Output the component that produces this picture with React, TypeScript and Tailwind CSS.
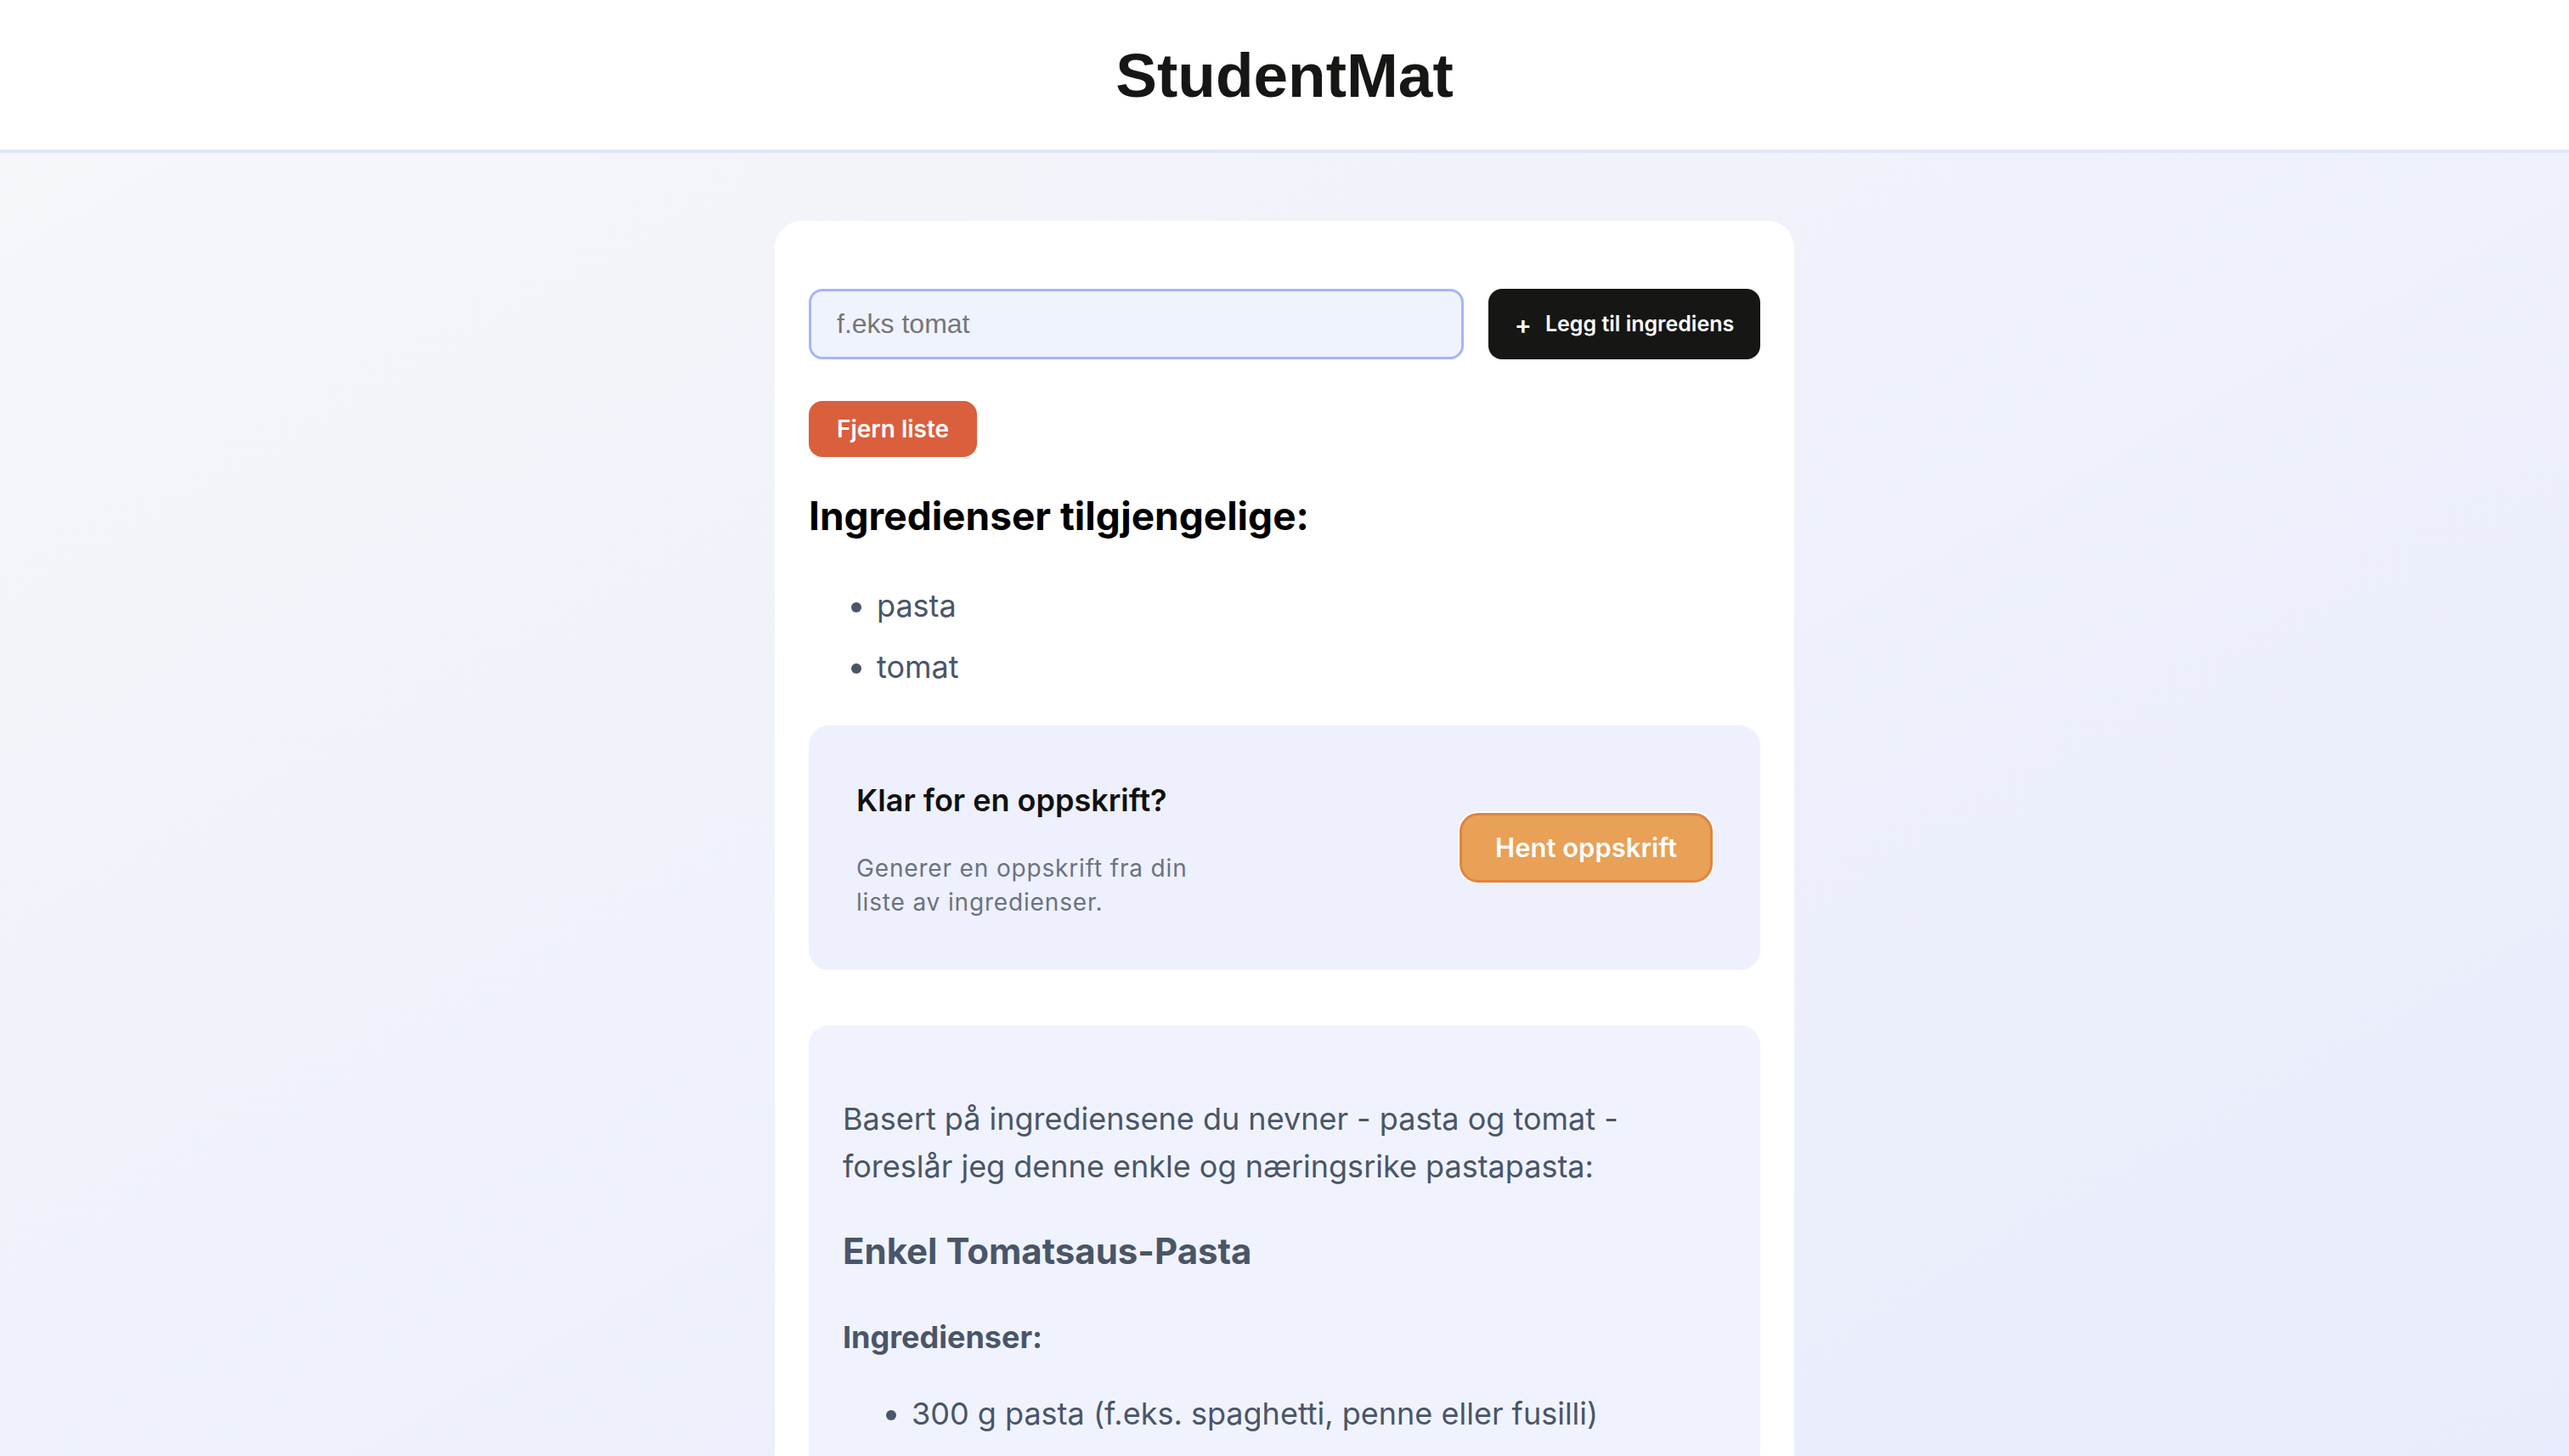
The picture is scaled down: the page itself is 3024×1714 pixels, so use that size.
import { useState } from "react";

const recipeIngredients = ["300 g pasta (f.eks. spaghetti, penne eller fusilli)"];

const App = () => {
  const [ingredient, setIngredient] = useState("");
  const [items, setItems] = useState<string[]>(["pasta", "tomat"]);

  const handleAdd = () => {
    if (ingredient.trim() === "") return;
    setItems((prev) => [...prev, ingredient.trim()]);
    setIngredient("");
  };

  return (
    <div className="h-screen overflow-hidden bg-gradient-to-br from-[#f6f7fa] to-[#e8ecfc] font-['Inter',sans-serif]">
      <header className="flex h-[180px] items-center justify-center border-b-4 border-[#e0e6fb] bg-white">
        <h1 className="font-['Liberation_Sans',Arial,sans-serif] text-[73px] leading-none font-bold text-[#161614]">
          StudentMat
        </h1>
      </header>

      <main className="mx-auto mt-[80px] w-[1200px] rounded-[32px] bg-white px-[40px] pt-[80px] pb-[40px]">
        <form
          className="flex gap-[29px]"
          onSubmit={(e) => {
            e.preventDefault();
            handleAdd();
          }}
        >
          <input
            type="text"
            value={ingredient}
            placeholder="f.eks tomat"
            onChange={(e) => setIngredient(e.target.value)}
            className="h-[83px] flex-1 rounded-[16px] border-[3px] border-[#a5b4fc] bg-[#eff3fe] px-[30px] font-['Liberation_Sans',Arial,sans-serif] text-[32px] text-[#222] outline-none placeholder:text-[#767676]"
          />
          <button
            type="submit"
            className="flex h-[83px] w-[320px] items-center justify-center rounded-[16px] bg-[#161614] text-[25px] font-semibold text-white"
          >
            <span className="mr-[16px] text-[30px] leading-none">+</span>
            Legg til ingrediens
          </button>
        </form>

        <div className="mt-[49px]">
          <button
            onClick={() => setItems([])}
            className="h-[66px] rounded-[16px] bg-[#da5f3d] px-[33px] text-[28px] font-semibold text-white"
          >
            Fjern liste
          </button>
        </div>

        <h2 className="mt-[37px] text-[46px] leading-[64px] font-bold text-black">
          Ingredienser tilgjengelige:
        </h2>
        <ul className="mt-[46px] list-disc space-y-[16px] pl-[80px] text-[36px] leading-[56px] text-[#4a5568]">
          {items.map((item) => (
            <li key={item}>{item}</li>
          ))}
        </ul>

        <div className="mt-[41px] flex items-center justify-between rounded-[24px] bg-[#eef0fd] px-[56px] py-[60px]">
          <div>
            <h3 className="text-[36px] leading-[56px] font-semibold text-[#111]">
              Klar for en oppskrift?
            </h3>
            <p className="mt-[32px] max-w-[420px] text-[28px] leading-[40px] tracking-[0.03em] text-[#6b7280]">
              Generer en oppskrift fra din liste av ingredienser.
            </p>
          </div>
          <button className="h-[82px] shrink-0 rounded-[22px] border-[3px] border-[#e0843f] bg-[#e8a157] px-[39px] text-[31px] font-semibold text-white ring-2 ring-white">
            Hent oppskrift
          </button>
        </div>

        <div className="mt-[65px] rounded-[24px] bg-[#f0f3fd] px-[40px] pt-[82px] pb-[40px] text-[#4a5568]">
          <p className="text-[36px] leading-[56px]">
            Basert på ingrediensene du nevner - pasta og tomat - foreslår jeg denne enkle og
            næringsrike pastapasta:
          </p>
          <h3 className="mt-[40px] text-[42px] leading-[64px] font-bold">Enkel Tomatsaus-Pasta</h3>
          <h4 className="mt-[41px] text-[36px] leading-[56px] font-bold">Ingredienser:</h4>
          <ul className="mt-[34px] list-disc space-y-[16px] pl-[81px] text-[36px] leading-[56px]">
            {recipeIngredients.map((line) => (
              <li key={line}>{line}</li>
            ))}
          </ul>
        </div>
      </main>
    </div>
  );
};

export default App;
